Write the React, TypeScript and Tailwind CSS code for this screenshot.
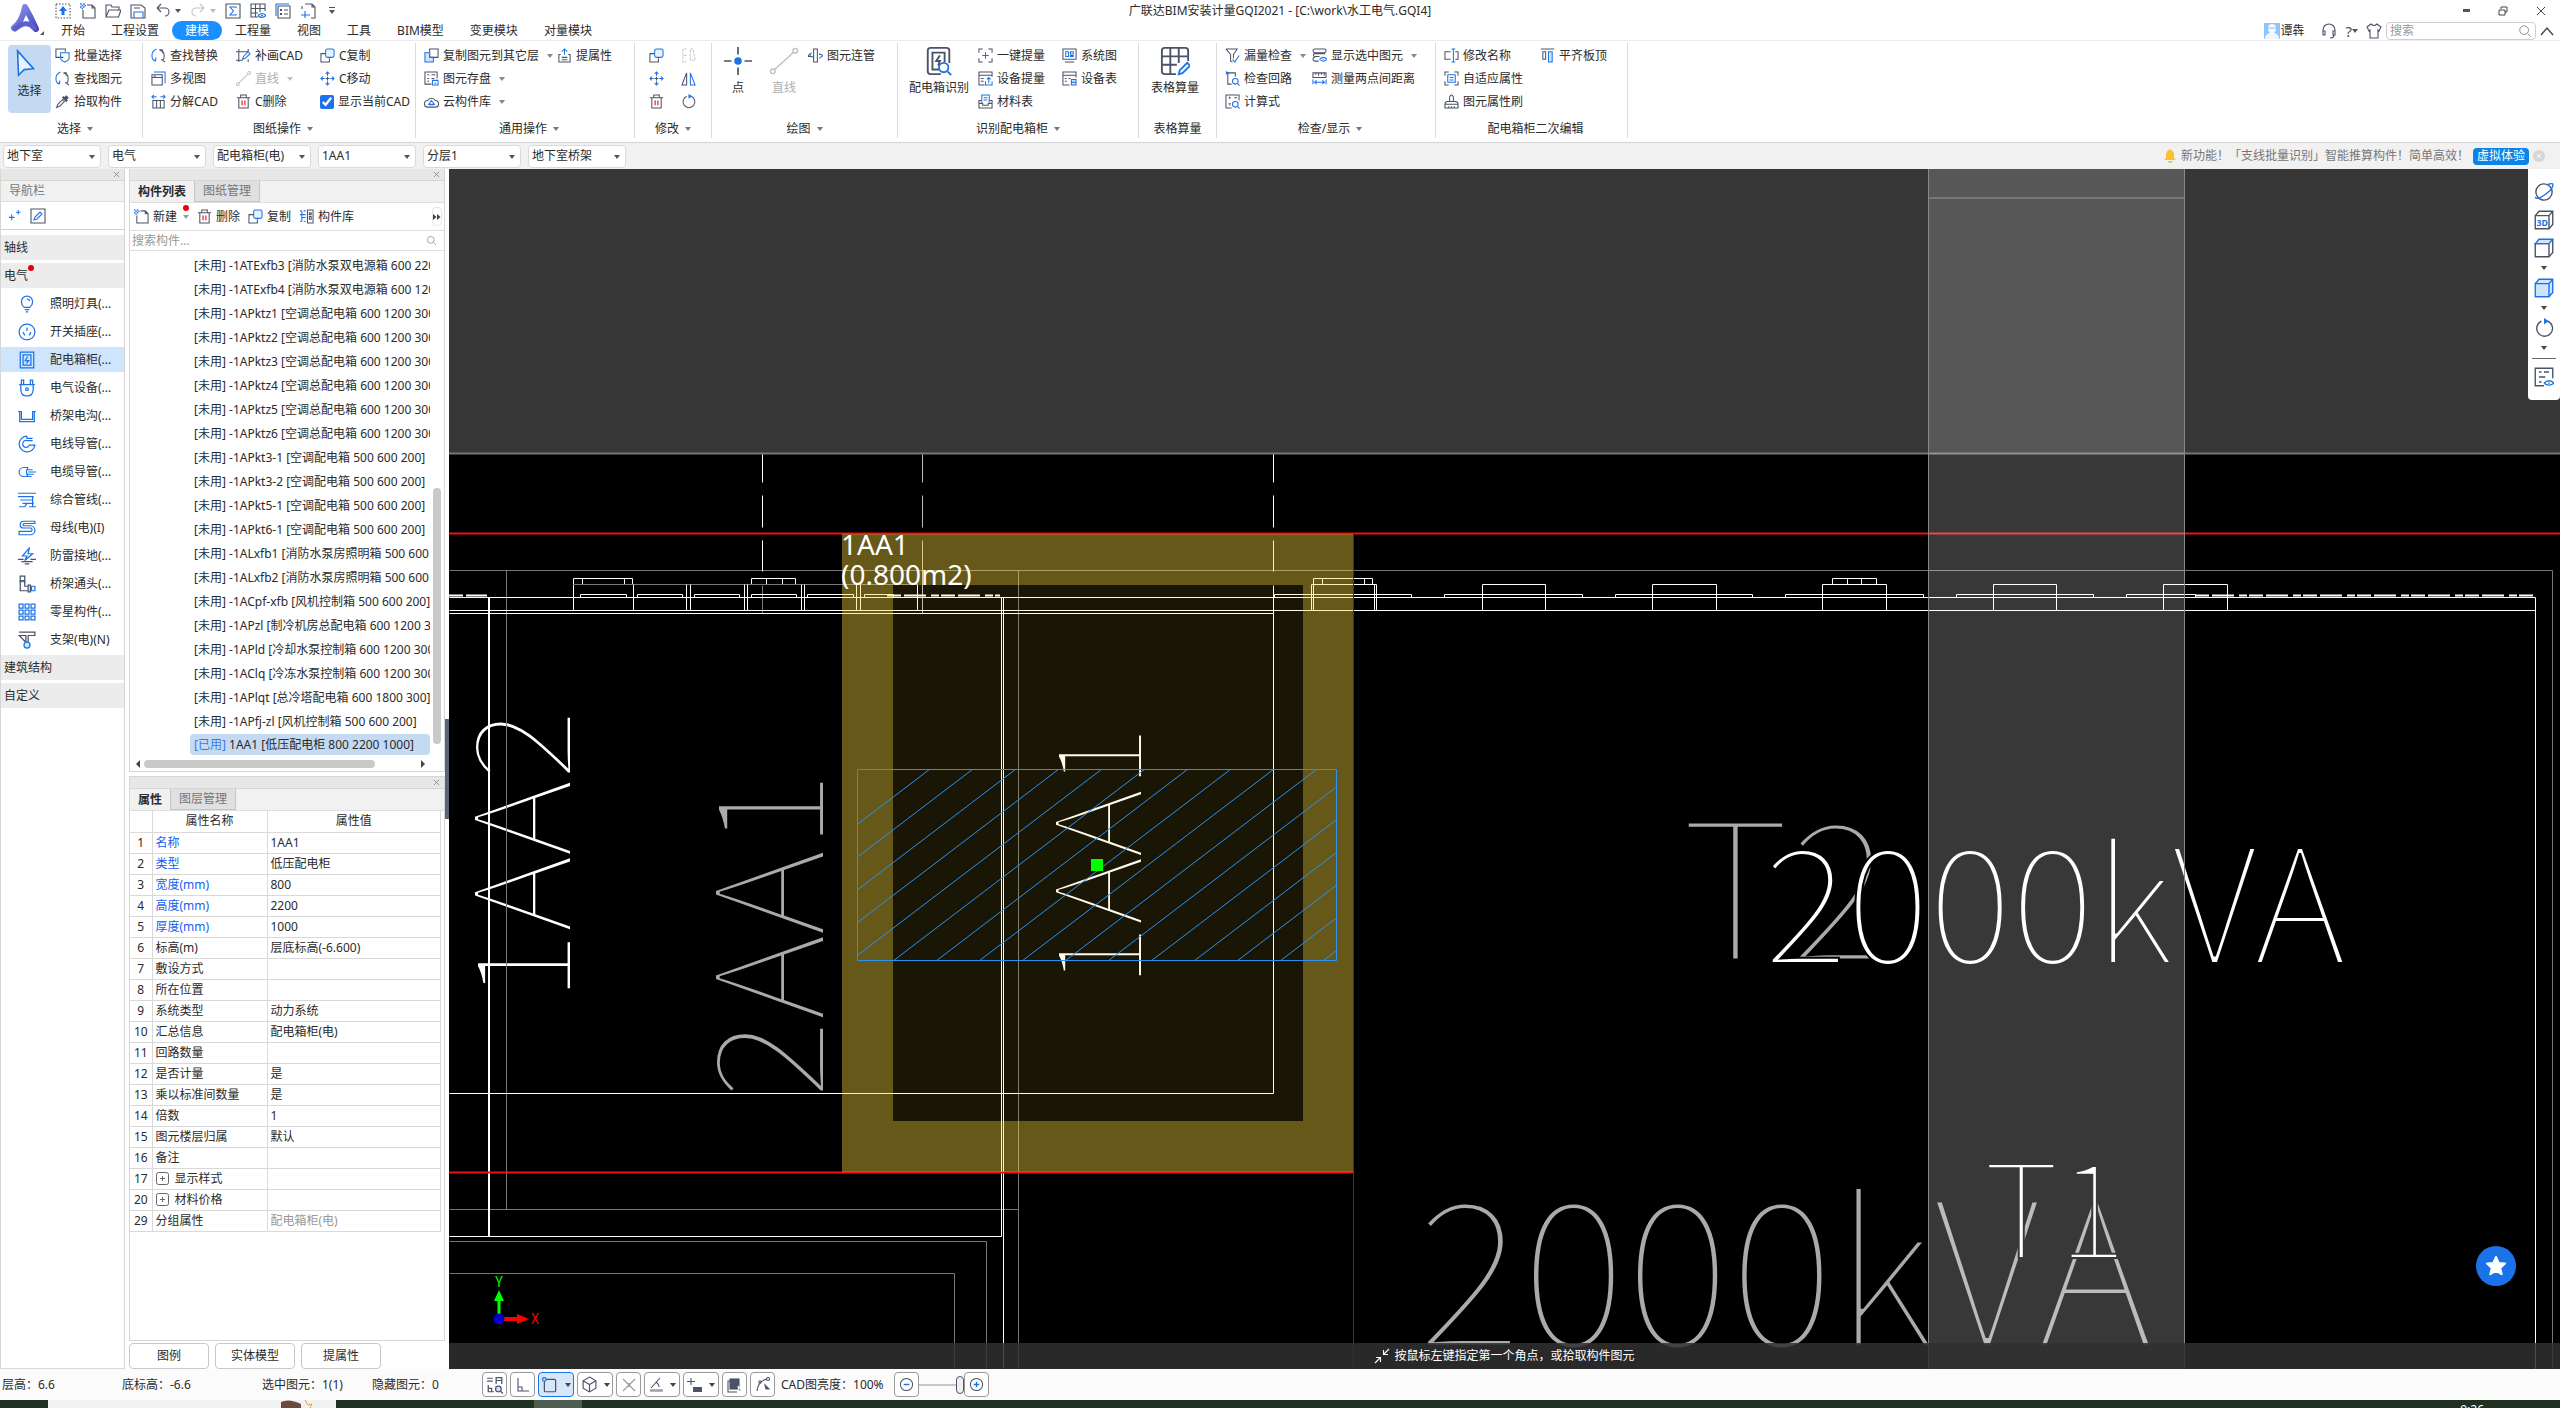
import React from 'react';

const G = '#4b5368';
const B = '#1a73e8';
const L = '#cfe3fb';

type IconDef = { d?: string; b?: string; x?: React.ReactNode };

const icons: Record<string, IconDef> = {
  upload: { x: <><rect x="1" y="1" width="14" height="14" stroke={G} strokeDasharray="1.5 1.5" /><path d="M8 3l4 5H9.5v4h-3V8H4z" fill={B} stroke="none" /></> },
  newDoc: { d: 'M7 2h5l3 3v10H3V7M12 2v3h3', x: <path d="M0 1h1.5M3 1h1.5M1.5 2.500H3M4.500 2.500H6M0 4h1.500M3 4h1.500M1.500 5.500H3" stroke={B} strokeWidth="1.500" /> },
  open: { d: 'M1 14V2h5l1 2h7v3M1 14l3-7h12l-2.500 7z' },
  save: { d: 'M1 15V2h10l4 3v10zM4 5h6', b: 'M4 15V9h9v6' },
  undo: { d: 'M2 5h8a4 4 0 0 1 0 8M2 5l4-4M2 5l4 4' },
  redo: { x: <path d="M14 5H6a4 4 0 0 0 0 8M14 5l-4-4M14 5l-4 4" stroke="#c4c4c4" /> },
  sigma: { d: 'M1 1h14v14H1z', b: 'M11 5V4H5l3.500 4L5 12h6v-1' },
  tableEye: { d: 'M8 14H1V1h14v7M1 5.500h14M1 10h7M5.500 1v13M10 1v8', b: 'M8 12.500q4-4 8 0q-4 4-8 0', x: <circle cx="12" cy="12.500" r="1" fill={B} /> },
  listDoc: { b: 'M1 13V1h13', d: 'M3 3h12v12H3zM9 7h4M9 11h4M5.500 6.500h1v1h-1zM5.500 10.500h1v1h-1z' },
  frame: { d: 'M5 1h7l3 3v11h-4M12 1v3h3M2 6V3', b: 'M5 8v7M1 12h9' },
  multi: { d: 'M9 10H1V1h10v3', b: 'M6 5h9v6q0 2-4.500 4Q6 13 6 11z' },
  find: { b: 'M6 1q-5 2-5 7t4 6M2 13h3v-3', d: 'M9 2q5 1 5 6t-2 5M9 2h3v3M11 12l4 3' },
  picker: { x: <><path d="M2 14l1-3 5-5 2 2-5 5z" stroke={G} /><path d="M8 4l4 4 1-1-1-1 2-2-2-2-2 2-1-1z" fill={G} stroke={G} /><path d="M1 15l2-2" stroke={B} /></> },
  views: { d: 'M1 4h11v11H1zM1 7h11M3 5.500h2', b: 'M3 1h12v12' },
  split: { d: 'M2 7h12v8H2zM6 7v8M10 7v8', b: 'M1 3h5M3 1L1 3l2 2M10 3h5M13 1l2 2-2 2' },
  patch: { d: 'M0 4h13M3 1v14M13 1v3M0 13h7M13 12v3', b: 'M7 12l1-3 5-5 2 2-5 5z' },
  lineGrey: { x: <g stroke="#c4c4c4"><path d="M3 13L13 3" /><circle cx="2" cy="14" r="1.500" /><circle cx="14" cy="2" r="1.500" /></g> },
  trash: { d: 'M1 4h14M5 4V1h6v3M3 4v11h10V4', x: <path d="M6.500 7v5M9.500 7v5" stroke="#e0242a" strokeWidth="1.300" /> },
  copy: { d: 'M6 6H1v9h9v-4', x: <rect x="6" y="1" width="9" height="9" rx="2" fill="#e8f2fe" stroke={B} /> },
  move: { b: 'M8 5V1M6 3l2-2 2 2M8 11v4M6 13l2 2 2-2M5 8H1M3 6L1 8l2 2M11 8h4M13 6l2 2-2 2', d: 'M6 8h4M8 6v4' },
  copyFloor: { d: 'M6 1h9v9H6z', x: <path d="M6 5H1v10h9v-5H6z" fill={L} stroke={B} /> },
  lift: { b: 'M8 7V1M5 4l3-3 3 3', d: 'M4 7H2v8h12V7h-2M5 10h6M5 12.500h6' },
  store: { d: 'M8 14H1V1h13v7M3.500 4h2M8 4h4M3.500 8h2M3.500 11h2M8 8h3', b: 'M9 10h6v5H9zM11 13h2' },
  cloud: { d: 'M4 14a3.500 3.500 0 0 1 0-7a4.500 4.500 0 0 1 8 0a3.500 3.500 0 0 1 0 7z', b: 'M5 11l3-4 3 4zM5 11.500h6' },
  mirrorGrey: { x: <path d="M6 1H2v14h4M6 8H2M10 1h3l2 12h-5z" stroke="#c9c9c9" strokeDasharray="3 1" /> },
  mirror: { b: 'M10 2v13h5z', d: 'M6 2v13H1z' },
  rotate: { d: 'M11 2.500a6.300 6.300 0 1 1-5 0', x: <path d="M8 0l4 2.500L8 5z" fill={B} stroke="none" /> },
  tube: { d: 'M6 1h4v14H6zM2 6L0 9h5M12 7h3', b: 'M4 5q-4 3 1 5M12 11l4-3-4-2' },
  keyQty: { d: 'M1 5V1h4M11 1h4v4M15 11v4h-4M5 15H1v-4', b: 'M8 4.500v7M4.500 8h7' },
  devQty: { d: 'M7 15H1V1h14v5M1 4.500h14M3 8h3M3 11h3', b: 'M8 11v4h7v-4M11.500 13V7M9.500 9l2-2 2 2' },
  material: { b: 'M4 9V1h8v8M6 4h4M6 6.500h4', d: 'M4 7H1v8h14V7h-3M1 10h4v2h6v-2h4' },
  system: { d: 'M1 1h14v11H1zM3 15h10', b: 'M4 4h3v5H4zM9 4h3v2.500H9zM9 8h3v1H9z' },
  devTable: { d: 'M8 15H1V1h14v6M1 4.500h14M3 8h2M7 8h2M3 11h2', x: <path d="M10 9h5v6h-5zM10 12h5" stroke={B} fill={L} /> },
  leak: { d: 'M1 1h12L9 7v4M1 1l5 6v7l2 1', b: 'M8 12l2.500 3L15 8' },
  showSel: { d: 'M3 1h10a1 1 0 0 1 0 4H3a1 1 0 0 1 0-4M8 9H3a1 1 0 0 1 0-3h11M7 14H3a1 1 0 0 1 0-4', b: 'M8 12q4-4 8 0q-4 4-8 0M11.500 12h1' },
  loop: { d: 'M3 2h8v4M3 2v12h4', x: <><path d="M1 0l4 2-4 2z" fill={B} stroke="none" /><circle cx="11" cy="11" r="3" stroke={B} /><path d="M13 13l2.500 2.500" stroke={B} /></> },
  measure: { d: 'M1 7V2h14v5zM4 2v2M7 2v3M10 2v2M13 2v3', b: 'M1 9v5M15 9v5M2 12h12M5 10l-2 2 2 2M11 10l2 2-2 2' },
  formula: { d: 'M7 15H1V1h14v6M4 4h2M5 3v2M10 4h3M4 10l2 2M6 10l-2 2', x: <><circle cx="11" cy="11" r="3" stroke={B} /><path d="M13 13l2.500 2.500" stroke={B} /></> },
  rename: { d: 'M7 4H1v8h6M12 4h3v8h-3', b: 'M8 1h4M10 1v14M8 15h4' },
  adapt: { d: 'M1 5V1h4M11 1h4v4M15 11v4h-4M5 15H1v-4', b: 'M4 4h8v8H4zM6 7h4M6 9.500h4' },
  brush: { d: 'M6 8V3q2-4 4 0v5M1 11q0-3 3-3h8q3 0 3 3v4H1zM1 11h14M5 13v2M8 13v2M11 13v2' },
  align: { d: 'M1 1h14M3 4h3v8H3z', x: <path d="M9 4h4v11H9z" fill={L} stroke={B} /> },
  bulb: { b: 'M5.500 11Q3 9 3 6a5 5 0 0 1 10 0q0 3-2.500 5zM6 13h4M7 15h2M8 3.500q2 0 2.500 2' },
  socket: { x: <g stroke={B}><circle cx="8" cy="8" r="7" /><path d="M8 4v3M4.500 8l1.500 3M11.500 8L10 11" /></g> },
  box: { b: 'M2 1h12v14H2zM4.500 3.500h7v9h-7zM8.500 5l-2 3.500h3L7.500 11' },
  device: { b: 'M1 5h14M3 5V1h2v4M11 5V1h2v4M2.500 5v4q0 6 5.500 6t5.500-6V5', x: <circle cx="8" cy="9" r="1.200" stroke={B} /> },
  tray: { b: 'M0 4h3v7h10V4h3M1.500 4v9h13V4' },
  wire: { b: 'M8 1a7 7 0 1 0 7 8H10a3 3 0 1 1-2-4h5M8 1v2h5' },
  cable: { b: 'M9 4H5a4 4 0 0 0 0 8h4M9 4q-3 4 0 8M8 6h5M9 8h7M8 10h6M8 12h4' },
  pipes: { b: 'M0 2h16M0 5h14M2 8h11M13 5v9M4 11h10M1 14h5l2-3M10 14h6' },
  bus: { b: 'M15 2H5a3 3 0 0 0 0 6h6a1 1 0 0 1 0 3H1v3h10a4 4 0 0 0 0-8H5.500a1 1 0 0 1 0-2H15z' },
  lightning: { b: 'M10 1L4 8h4l-2 4 7-6H9z', d: 'M0 11h5M11 11h5M3 13h10M6 15h4' },
  joint: { d: 'M2 1h4v4H2zM2 5v9h7v-4H6V5M9 9h2v6H9z', b: 'M1 6h6M12 10h3v4h-3z' },
  grid: { b: 'M1 1h3.500v3.500H1zM6.300 1h3.500v3.500H6.300zM11.600 1h3.500v3.500h-3.500zM1 6.300h3.500v3.500H1zM6.300 6.300h3.500v3.500H6.300zM11.600 6.300h3.500v3.500h-3.500zM1 11.600h3.500v3.500H1zM6.300 11.600h3.500v3.500H6.300zM11.600 11.600h3.500v3.500h-3.500z' },
  support: { d: 'M1 1h14v3H9v6M7 10V4H1z', x: <circle cx="8" cy="12.500" r="2.700" fill={L} stroke={B} /> },
  plus2: { b: 'M5 7v6M2 10h6M12 2v5M9.500 4.500h5' },
  edit: { d: 'M1 1h14v14H1z', b: 'M4 12l1-3 5-5 2 2-5 5z' },
  lib: { d: 'M9 1h6v14H9zM11 4h2v2h-2zM11 8h2v3h-2z', b: 'M1 2h2M5 2h2M1 6h6M1 13h2M5 13h2M3 9h4M3 2v11' },
  search: { x: <g stroke="#8d8d8d"><circle cx="7" cy="7" r="5" /><path d="M11 11l3.500 3.500" /></g> },
  headset: { d: 'M2 10V7a6 6 0 0 1 12 0v3M2 8v4h2V8zM14 8v4h-2V8zM13 12q0 3-4 3' },
  shirt: { d: 'M5 1L1 4l2 4 1-1v8h8V7l1 1 2-4-4-3q-3 3-6 0z' },
  orbit: { x: <><circle cx="8" cy="8" r="6.500" stroke={G} /><path d="M1 12q1 3 8-2t6-8.500Q14 1 11 2" stroke={B} /></> },
  cube3d: { d: 'M1 4.500h11V15H1zM1 4.500L4 1h11v10.500L12 15M12 4.500L15 1', x: <text x="2" y="13" fontSize="7" fill={B} stroke="none" fontWeight="700">3D</text> },
  cubeTop: { d: 'M1 4.500h11V15H1zM15 1v10.500L12 15M12 4.500V15', x: <path d="M1 4.500L4 1h11l-3 3.500z" fill={L} stroke={B} /> },
  cubeBlue: { x: <path d="M1 4.500h11V15H1zM1 4.500L4 1h11v10.500L12 15M12 4.500L15 1" fill={L} stroke={B} /> },
  listEye: { d: 'M8 15H1V1h14v8M4 4h2M8 4h4M4 8h5M4 12h2', b: 'M8 13q4-4 8 0q-4 3-8 0M11.500 13h1' },
  sbFind: { d: 'M1 2h5M1 4.500h5M9 7V1.500h5V7M9 4h5M2 8v6h5M2 11h3v3', x: <><circle cx="11" cy="11.500" r="2.500" fill={L} stroke={G} /><path d="M13 13.500l2 2" stroke={G} /></> },
  sbOrtho: { d: 'M3 1v13h11M3 10h4v4' },
  sbRect: { d: 'M3 4q0-1 1-1h8q1 0 1 1v9q0 1-1 1H4q-1 0-1-1z', x: <circle cx="3" cy="3" r="1.600" fill={L} stroke={B} /> },
  sbCube: { d: 'M8 1l6 3.500v7L8 15l-6-3.500v-7zM2 4.500l6 3.500 6-3.500M8 8v7' },
  sbCross: { x: <path d="M2 2l12 12M14 2L2 14M8 6v4" stroke="#9a9a9a" /> },
  sbAngle: { d: 'M3 11L12 1', x: <><path d="M2 13.500h13" stroke="#9a9fad" strokeWidth="2.500" /><path d="M8 5q3 2 3 5" stroke={G} /></> },
  sbPlus: { d: 'M4 1v7M0 4.500h8', x: <rect x="6" y="10" width="9" height="5" fill={G} stroke="none" /> },
  sbSelect: { d: 'M3 4H1v11h9', x: <><rect x="3" y="2" width="9" height="10" fill={G} stroke={G} /><path d="M11 9l4 5h-3z" fill={G} stroke="#fff" /></> },
  sbCurve: { d: 'M2 14Q3 4 12 2', x: <><circle cx="13" cy="2" r="1.500" stroke={G} /><circle cx="5" cy="5" r="1.200" stroke={G} /><path d="M10 8l4 4h-3z" fill={G} stroke={G} /></> },
  minus: { x: <><circle cx="8" cy="8" r="6.500" stroke={G} /><path d="M5 8h6" stroke={B} strokeWidth="1.500" /></> },
  plus: { x: <><circle cx="8" cy="8" r="6.500" stroke={G} /><path d="M5 8h6M8 5v6" stroke={B} strokeWidth="1.500" /></> },
  arrowsIn: { x: <path d="M15 1L9.500 6.500M9.500 2v4.500H14M1 15l5.500-5.500M6.500 14V9.500H2" stroke="#fff" /> },
};

function Icon({ name, className = 'size-[15px]' }: { name: string; className?: string }) {
  const i = icons[name];
  return (
    <svg viewBox="0 0 16 16" fill="none" strokeWidth="1.1" className={`shrink-0 ${className}`} aria-hidden="true">
      {i.d && <path d={i.d} stroke={G} />}
      {i.b && <path d={i.b} stroke={B} />}
      {i.x}
    </svg>
  );
}

function Caret({ className = 'border-t-[#777]' }: { className?: string }) {
  return <span className={`inline-block border-x-[3px] border-t-4 border-x-transparent ${className}`} />;
}

function Tool({ icon, label, caret, muted }: { icon: string; label?: string; caret?: boolean; muted?: boolean }) {
  return (
    <button aria-label={label ?? icon} className={`flex h-[23px] items-center gap-1 whitespace-nowrap ${muted ? 'text-[#b0b0b0]' : ''}`}>
      <Icon name={icon} />
      {label && <span>{label}</span>}
      {caret && <Caret className={muted ? 'ml-1 border-t-[#c0c0c0]' : 'ml-1 border-t-[#888]'} />}
    </button>
  );
}

function Group({ label, caret, className, children }: { label: string; caret?: boolean; className: string; children: React.ReactNode }) {
  return (
    <section className={`flex shrink-0 flex-col border-r border-[#dcdcdc] ${className}`}>
      <div className="flex h-[72px] items-start">{children}</div>
      <div className="flex flex-1 items-center justify-center gap-1.5 pt-1">
        {label}
        {caret && <Caret />}
      </div>
    </section>
  );
}

const Col = ({ className = '', children }: { className?: string; children: React.ReactNode }) => (
  <div className={`flex shrink-0 flex-col items-start ${className}`}>{children}</div>
);

function Header() {
  const tabs = ['开始', '工程设置', '建模', '工程量', '视图', '工具', 'BIM模型', '变更模块', '对量模块'];
  return (
    <header className="relative flex h-[41px] shrink-0 border-b border-[#ececec]">
      <svg viewBox="0 0 40 36" className="h-9 w-12 shrink-0" aria-label="Logo" fill="none">
        <defs>
          <linearGradient id="logo" x1="0" y1="0" x2="1" y2="1">
            <stop offset="0" stopColor="#8a97f0" />
            <stop offset="1" stopColor="#4a45b4" />
          </linearGradient>
        </defs>
        <path d="M10 28Q18 22 21 7q6 10 11 22" stroke="url(#logo)" strokeWidth="6" strokeLinecap="round" strokeLinejoin="round" />
        <path d="M11 29q12-10 19-1" stroke="#5d5fd0" strokeWidth="5" strokeLinecap="round" />
        <path d="M40 31v4h-4z" fill="#555" />
      </svg>
      <div className="flex flex-1 flex-col">
        <div className="flex h-[21px] items-center gap-[9px] pl-[7px]">
          {['upload', 'newDoc', 'open', 'save'].map((n) => (
            <button key={n} aria-label={n}><Icon name={n} className="size-4" /></button>
          ))}
          <button aria-label="撤销" className="flex items-center gap-1"><Icon name="undo" className="size-4" /><Caret className="border-t-[#555]" /></button>
          <button aria-label="恢复" className="flex items-center gap-1"><Icon name="redo" className="size-4" /><Caret className="border-t-[#bbb]" /></button>
          {['sigma', 'tableEye', 'listDoc', 'frame'].map((n) => (
            <button key={n} aria-label={n}><Icon name={n} className="size-4" /></button>
          ))}
          <button aria-label="更多" className="flex flex-col items-center gap-0.5 pl-1"><span className="h-px w-1.5 bg-[#555]" /><Caret className="border-t-[#555]" /></button>
        </div>
        <nav className="flex h-[19px] items-center">
          {tabs.map((t) => (
            <button key={t} className={`h-[19px] rounded-full px-[13px] leading-[18px] ${t === '建模' ? 'bg-[#1890ff] text-white' : ''}`}>{t}</button>
          ))}
        </nav>
      </div>
      <h1 className="pointer-events-none absolute inset-x-0 top-0 flex h-[21px] items-center justify-center text-[12px]">广联达BIM安装计量GQI2021 - [C:\work\水工电气.GQI4]</h1>
      <div className="flex flex-col items-end">
        <div className="flex h-[21px] items-center gap-7 pr-[14px]">
          <button aria-label="最小化" className="h-[3px] w-[7px] bg-[#555]" />
          <button aria-label="还原"><svg viewBox="0 0 10 10" className="size-[10px]" fill="none" stroke="#444"><path d="M3 3V1h6v5H7M1 4h6v5H1z" /></svg></button>
          <button aria-label="关闭"><svg viewBox="0 0 10 10" className="size-[10px]" stroke="#444"><path d="M1 1l8 8M9 1L1 9" /></svg></button>
        </div>
        <div className="flex h-[19px] items-center pr-1.5">
          <svg viewBox="0 0 16 16" className="size-4" aria-hidden="true"><path fill="#8ec6fb" d="M0 0h16v16H0z" /><path fill="#f2f8fe" d="M4 5a4 4 0 0 1 8 0q0 4-2 5 5 1 5 6H1q0-5 5-6-2-1-2-5" /><path stroke="#8ec6fb" d="M3 5h10" /></svg>
          <span>谭犇</span>
          <button aria-label="客服" className="ml-[17px]"><Icon name="headset" className="size-4" /></button>
          <button aria-label="帮助" className="ml-2 flex items-center text-[15px] leading-4 text-[#4b5368]">?<Caret className="border-t-[#555]" /></button>
          <button aria-label="皮肤" className="ml-2"><Icon name="shirt" className="size-4" /></button>
          <label className="ml-1 flex h-[18px] w-[150px] items-center rounded border border-[#cfcfcf] px-[3px]">
            <input aria-label="搜索" placeholder="搜索" className="w-full min-w-0 text-[12px] outline-none placeholder:text-[#999]" />
            <Icon name="search" className="size-3.5" />
          </label>
          <button aria-label="收起" className="ml-1"><svg viewBox="0 0 14 10" className="h-2.5 w-3.5" fill="none" stroke="#444" strokeWidth="1.400"><path d="M1 9l6-7 6 7" /></svg></button>
        </div>
      </div>
    </header>
  );
}

function Ribbon() {
  return (
    <div className="flex h-[102px] shrink-0 overflow-hidden border-b border-[#d4d4d4] pb-1 pt-0.5">
      <Group label="选择" caret className="w-[143px] pl-2">
        <button className="mt-0.5 flex h-[68px] w-[43px] shrink-0 flex-col items-center rounded bg-[#c3daf2] pt-1">
          <svg viewBox="0 0 24 32" className="mr-2 h-[30px] w-6" fill="none" stroke={B} strokeWidth="1.700"><path d="M3 2l17 19-10 1-6 6z" fill="#e9f2fd" /></svg>
          <span className="mt-1">选择</span>
        </button>
        <Col className="ml-1 pt-px">
          <Tool icon="multi" label="批量选择" /><Tool icon="find" label="查找图元" /><Tool icon="picker" label="拾取构件" />
        </Col>
      </Group>
      <Group label="图纸操作" caret className="w-[273px] pl-2 pt-px">
        <Col className="w-[85px]"><Tool icon="find" label="查找替换" /><Tool icon="views" label="多视图" /><Tool icon="split" label="分解CAD" /></Col>
        <Col className="w-[84px]"><Tool icon="patch" label="补画CAD" /><Tool icon="lineGrey" label="直线" caret muted /><Tool icon="trash" label="C删除" /></Col>
        <Col>
          <Tool icon="copy" label="C复制" /><Tool icon="move" label="C移动" />
          <label className="flex h-[23px] items-center gap-1 whitespace-nowrap"><input type="checkbox" defaultChecked className="size-[14px] accent-[#1a73e8]" />显示当前CAD</label>
        </Col>
      </Group>
      <Group label="通用操作" caret className="w-[219px] pl-2 pt-px">
        <Col>
          <div className="flex gap-1"><Tool icon="copyFloor" label="复制图元到其它层" caret /><Tool icon="lift" label="提属性" /></div>
          <Tool icon="store" label="图元存盘" caret /><Tool icon="cloud" label="云构件库" caret />
        </Col>
      </Group>
      <Group label="修改" caret className="w-[77px] pt-px">
        <Col className="ml-[14px] w-8"><Tool icon="copy" /><Tool icon="move" /><Tool icon="trash" /></Col>
        <Col><Tool icon="mirrorGrey" /><Tool icon="mirror" /><Tool icon="rotate" /></Col>
      </Group>
      <Group label="绘图" caret className="w-[186px] pt-px">
        <button className="ml-2.5 flex w-8 shrink-0 flex-col items-center pt-0.5">
          <svg viewBox="0 0 32 32" className="size-[30px]" stroke={G} strokeWidth="1.800"><path d="M16 1v8M16 23v8M1 16h8M23 16h8" /><circle cx="16" cy="16" r="4" fill={B} stroke="none" /></svg>
          <span className="mt-1">点</span>
        </button>
        <button className="ml-[14px] flex w-8 shrink-0 flex-col items-center pt-0.5 text-[#b0b0b0]">
          <svg viewBox="0 0 32 32" className="size-[30px]" fill="none" stroke="#c0c0c0" strokeWidth="1.500"><path d="M6 25L26 7" /><circle cx="4" cy="27" r="2.500" /><circle cx="28" cy="5" r="2.500" /></svg>
          <span className="mt-1">直线</span>
        </button>
        <Col className="ml-2"><Tool icon="tube" label="图元连管" /></Col>
      </Group>
      <Group label="识别配电箱柜" caret className="w-[241px] pt-px">
        <button className="ml-2.5 flex w-[62px] shrink-0 flex-col items-center whitespace-nowrap pt-0.5">
          <svg viewBox="0 0 32 32" className="size-[30px]" fill="none" stroke={G} strokeWidth="2"><path d="M18 30H7q-3 0-3-3V5q0-3 3-3h17q3 0 3 3v13M16 25H9V7h13v10M17 10l-4 6h4l-2 5" /><circle cx="21" cy="23" r="5" stroke={B} /><path d="M25 27l4 4" stroke={B} /></svg>
          <span className="mt-1">配电箱识别</span>
        </button>
        <Col className="ml-2 w-[84px]"><Tool icon="keyQty" label="一键提量" /><Tool icon="devQty" label="设备提量" /><Tool icon="material" label="材料表" /></Col>
        <Col><Tool icon="system" label="系统图" /><Tool icon="devTable" label="设备表" /></Col>
      </Group>
      <Group label="表格算量" className="w-[78px] pt-px">
        <button className="ml-2.5 flex w-[52px] shrink-0 flex-col items-center pt-0.5">
          <svg viewBox="0 0 32 32" className="size-[30px]" fill="none" stroke={G} strokeWidth="2"><path d="M17 30H5q-3 0-3-3V5q0-3 3-3h22q3 0 3 3v11M2 11h28M2 20h16M11 2v28M20 2v16" /><path d="M20 30l1-4 8-8 3 3-8 8z" stroke={B} /></svg>
          <span className="mt-1">表格算量</span>
        </button>
      </Group>
      <Group label="检查/显示" caret className="w-[219px] pl-2 pt-px">
        <Col className="w-[87px]"><Tool icon="leak" label="漏量检查" caret /><Tool icon="loop" label="检查回路" /><Tool icon="formula" label="计算式" /></Col>
        <Col><Tool icon="showSel" label="显示选中图元" caret /><Tool icon="measure" label="测量两点间距离" /></Col>
      </Group>
      <Group label="配电箱柜二次编辑" className="w-[192px] pl-2 pt-px">
        <Col className="w-24"><Tool icon="rename" label="修改名称" /><Tool icon="adapt" label="自适应属性" /><Tool icon="brush" label="图元属性刷" /></Col>
        <Col><Tool icon="align" label="平齐板顶" /></Col>
      </Group>
    </div>
  );
}

function FilterBar() {
  return (
    <div className="flex h-[26px] shrink-0 items-center justify-between bg-[#f1f1f1] px-[3px]">
      <div className="flex gap-[7px]">
        {['地下室', '电气', '配电箱柜(电)', '1AA1', '分层1', '地下室桥架'].map((v) => (
          <div key={v} className="relative h-[23px] w-[98px] rounded border border-[#dadada] bg-white">
            <select aria-label={v} className="h-full w-full appearance-none bg-transparent pl-[3px] pr-4 outline-none"><option>{v}</option></select>
            <Caret className="pointer-events-none absolute right-[5px] top-[9px] border-t-[#555]" />
          </div>
        ))}
      </div>
      <div className="flex items-center gap-1 pr-3 text-[#777]">
        <svg viewBox="0 0 14 14" className="size-3.5" aria-hidden="true"><path fill="#fbc02d" d="M7 0a1 1 0 0 1 1 1q3 1 3 5v3l2 2H1l2-2V6q0-4 3-5a1 1 0 0 1 1-1M5 12h5q-1 2-3 2t-2-2" /></svg>
        <span>新功能！「支线批量识别」智能推算构件！简单高效！</span>
        <button className="h-[17px] rounded-sm bg-[#0a84e8] px-1 leading-4 text-white">虚拟体验</button>
        <button aria-label="关闭通知"><svg viewBox="0 0 12 12" className="size-3"><circle cx="6" cy="6" r="6" fill="#d6d6d6" /><path d="M4 4l4 4M8 4L4 8" stroke="#fff" /></svg></button>
      </div>
    </div>
  );
}

function Strip() {
  return (
    <div className="flex h-3 shrink-0 items-center justify-end border-b border-[#d6d6d6] bg-[#e7e7e7] pr-1">
      <button aria-label="关闭面板"><svg viewBox="0 0 8 8" className="size-[7px]" stroke="#888"><path d="M1 1l6 6M7 1L1 7" /></svg></button>
    </div>
  );
}

function NavPanel() {
  const items = [
    ['bulb', '照明灯具(...'], ['socket', '开关插座(...'], ['box', '配电箱柜(...'], ['device', '电气设备(...'], ['tray', '桥架电沟(...'],
    ['wire', '电线导管(...'], ['cable', '电缆导管(...'], ['pipes', '综合管线(...'], ['bus', '母线(电)(I)'], ['lightning', '防雷接地(...'],
    ['joint', '桥架通头(...'], ['grid', '零星构件(...'], ['support', '支架(电)(N)'],
  ];
  const head = 'relative h-[25px] w-full bg-[#ececec] pl-[3px] text-left';
  return (
    <aside className="flex w-[125px] shrink-0 flex-col border border-t-0 border-[#d6d6d6] bg-white">
      <Strip />
      <div className="flex h-[21px] shrink-0 items-center border-b border-[#dedede] bg-[#f1f1f1] pl-2 text-[#777]">导航栏</div>
      <div className="flex h-7 shrink-0 items-center gap-2 border-b border-[#d0d0d0] pl-1.5">
        <button aria-label="添加"><Icon name="plus2" className="size-[15px]" /></button>
        <button aria-label="编辑"><Icon name="edit" className="size-4" /></button>
      </div>
      <div className="flex flex-col gap-[3px] pt-[5px]">
        <button className={head}>轴线</button>
        <button className={head}>电气<span className="absolute left-[27px] top-0.5 size-1.5 rounded-full bg-red-600" /></button>
        {items.map(([icon, label]) => (
          <button key={icon} className={`flex h-[25px] items-center gap-[14px] pl-[17px] ${icon === 'box' ? 'bg-[#cfe5fd]' : ''}`}>
            <Icon name={icon} className="size-[18px]" />{label}
          </button>
        ))}
        <button className={head}>建筑结构</button>
        <button className={head}>自定义</button>
      </div>
    </aside>
  );
}

const components = [
  '-1ATExfb3 [消防水泵双电源箱 600 2200 400]', '-1ATExfb4 [消防水泵双电源箱 600 1200 300]', '-1APktz1 [空调总配电箱 600 1200 300]', '-1APktz2 [空调总配电箱 600 1200 300]',
  '-1APktz3 [空调总配电箱 600 1200 300]', '-1APktz4 [空调总配电箱 600 1200 300]', '-1APktz5 [空调总配电箱 600 1200 300]', '-1APktz6 [空调总配电箱 600 1200 300]',
  '-1APkt3-1 [空调配电箱 500 600 200]', '-1APkt3-2 [空调配电箱 500 600 200]', '-1APkt5-1 [空调配电箱 500 600 200]', '-1APkt6-1 [空调配电箱 500 600 200]',
  '-1ALxfb1 [消防水泵房照明箱 500 600 200]', '-1ALxfb2 [消防水泵房照明箱 500 600 200]', '-1ACpf-xfb [风机控制箱 500 600 200]', '-1APzl [制冷机房总配电箱 600 1200 300]',
  '-1APld [冷却水泵控制箱 600 1200 300]', '-1AClq [冷冻水泵控制箱 600 1200 300]', '-1APlqt [总冷塔配电箱 600 1800 300]', '-1APfj-zl [风机控制箱 500 600 200]', '1AA1 [低压配电柜 800 2200 1000]',
];

const props: [number, string, string][] = [
  [1, '名称', '1AA1'], [2, '类型', '低压配电柜'], [3, '宽度(mm)', '800'], [4, '高度(mm)', '2200'], [5, '厚度(mm)', '1000'],
  [6, '标高(m)', '层底标高(-6.600)'], [7, '敷设方式', ''], [8, '所在位置', ''], [9, '系统类型', '动力系统'], [10, '汇总信息', '配电箱柜(电)'],
  [11, '回路数量', ''], [12, '是否计量', '是'], [13, '乘以标准间数量', '是'], [14, '倍数', '1'], [15, '图元楼层归属', '默认'], [16, '备注', ''],
  [17, '显示样式', ''], [20, '材料价格', ''], [29, '分组属性', '配电箱柜(电)'],
];

function PanelTabs({ a, b }: { a: string; b: string }) {
  return (
    <div role="tablist" className="flex h-[22px] shrink-0 border-b border-[#dedede] bg-[#f1f1f1]">
      <button role="tab" aria-selected="true" className="border-r border-[#c4c4c4] px-2 font-bold">{a}</button>
      <button role="tab" aria-selected="false" className="border border-t-0 border-l-0 border-[#c4c4c4] bg-[#e0e0e0] px-2 text-[#777]">{b}</button>
    </div>
  );
}

function ComponentPanel() {
  return (
    <section className="flex shrink-0 flex-col border border-t-0 border-[#d6d6d6] bg-white">
      <Strip />
      <PanelTabs a="构件列表" b="图纸管理" />
      <div className="flex h-7 shrink-0 items-center border-b border-[#dedede] pl-1">
        <button className="relative flex items-center gap-1"><Icon name="newDoc" />新建<Caret className="ml-0.5 border-t-[#999]" /><span className="absolute -top-1 right-0 size-1.5 rounded-full bg-red-600" /></button>
        <button className="ml-2 flex items-center gap-1"><Icon name="trash" />删除</button>
        <button className="ml-2 flex items-center gap-1"><Icon name="copy" />复制</button>
        <button className="ml-2 flex items-center gap-1"><Icon name="lib" />构件库</button>
        <button aria-label="更多" className="ml-auto mr-0.5 flex h-[19px] w-[10px] items-center justify-center rounded border border-[#e6e6e6]">
          <svg viewBox="0 0 8 6" className="h-1.5 w-2 shrink-0" fill="#444"><path d="M0 0l3.500 3L0 6zM4 0l3.500 3L4 6z" /></svg>
        </button>
      </div>
      <label className="flex h-5 shrink-0 items-center border-b border-[#dedede] pl-0.5 pr-[7px]">
        <input aria-label="搜索构件" placeholder="搜索构件..." className="min-w-0 flex-1 outline-none placeholder:text-[#999]" />
        <Icon name="search" className="size-[11px]" />
      </label>
      <div className="flex shrink-0 pt-[3px]">
        <ul className="ml-[60px] min-w-0 flex-1 overflow-hidden whitespace-nowrap">
          {components.map((c, i) => {
            const used = i === components.length - 1;
            return (
              <li key={c} className={`flex items-center overflow-hidden pl-1 ${used ? 'h-[21px] rounded-sm bg-[#c3daf2]' : 'h-6'}`}>
                <span className={used ? 'text-[#3a7be0]' : ''}>[{used ? '已用' : '未用'}]</span>&nbsp;{c}
              </li>
            );
          })}
        </ul>
        <div className="w-[14px] pl-[3px] pt-[234px]"><div className="h-64 w-2 rounded bg-[#c9c9c9]" /></div>
      </div>
      <div className="mt-0.5 flex h-[14px] shrink-0 items-center pl-1.5 pr-[19px]">
        <span className="border-y-4 border-r-4 border-y-transparent border-r-[#444]" />
        <span className="ml-1 h-2 w-[231px] rounded bg-[#c9c9c9]" />
        <span className="ml-auto border-y-4 border-l-4 border-y-transparent border-l-[#444]" />
      </div>
    </section>
  );
}

function PropertyPanel() {
  return (
    <section className="mt-1 flex min-h-0 flex-1 flex-col">
      <div className="flex min-h-0 flex-1 flex-col border border-[#d6d6d6] bg-white">
        <Strip />
        <PanelTabs a="属性" b="图层管理" />
        <table className="mr-[3px] table-fixed border-collapse [&_td]:border-b [&_td]:border-r [&_td]:border-[#d9d9d9] [&_th]:border-b [&_th]:border-r [&_th]:border-[#d9d9d9]">
          <colgroup><col className="w-[22px]" /><col className="w-[115px]" /><col /></colgroup>
          <thead><tr className="h-[21px]"><th aria-label="序号" /><th className="font-normal">属性名称</th><th className="font-normal">属性值</th></tr></thead>
          <tbody>
            {props.map(([n, name, value]) => (
              <tr key={n} className="h-[21px] leading-5">
                <td className="text-center">{n}</td>
                <td className={`whitespace-nowrap pl-[3px] ${n <= 5 ? 'text-[#1560f0]' : ''}`}>
                  {n === 17 || n === 20 ? (
                    <span className="flex items-center gap-1.5">
                      <button aria-label={`展开${name}`}>
                        <svg viewBox="0 0 13 13" className="size-[13px]" fill="none" stroke="#666"><rect x="0.5" y="0.5" width="12" height="12" rx="2" /><path d="M4 6.500h5M6.500 4v5" /></svg>
                      </button>
                      {name}
                    </span>
                  ) : name}
                </td>
                <td className={`whitespace-nowrap pl-[3px] ${n === 29 ? 'text-[#999]' : ''}`}>{value}</td>
              </tr>
            ))}
          </tbody>
        </table>
      </div>
      <div className="flex shrink-0 gap-1.5 pt-0.5">
        {['图例', '实体模型', '提属性'].map((b) => (
          <button key={b} className="h-[26px] w-20 rounded border border-[#c8c8c8] bg-white">{b}</button>
        ))}
      </div>
    </section>
  );
}

/** Lines are [x1, y1, x2, y2] in drawing units. */
const white: number[][] = [
  [449, 597, 2535, 597], [449, 610, 2535, 610], [449, 613, 1273, 613], [449, 1236, 1001, 1236],
  [488, 597, 488, 1236], [489, 597, 489, 1236], [1001, 597, 1001, 1236], [1003, 597, 1003, 1368], [2535, 597, 2535, 1369],
  [762, 454, 762, 482], [762, 495, 762, 527], [762, 540, 762, 571],
  [1273, 454, 1273, 482], [1273, 495, 1273, 527], [1273, 540, 1273, 571], [1273, 585, 1273, 1093], [449, 1093, 1273, 1093],
];
const grey: number[][] = [
  [449, 570, 2552, 570], [2552, 570, 2552, 1369], [506, 570, 506, 1209], [1018, 570, 1018, 1369], [449, 1209, 1018, 1209],
  [449, 1241, 986, 1241], [986, 1241, 986, 1369], [449, 1273, 954, 1273], [954, 1273, 954, 1369],
  [762, 585, 762, 613], [573, 584, 917, 584],
];
const light: number[][] = [[922, 454, 922, 482], [922, 495, 922, 527], [922, 540, 922, 613]];
const posts = [573, 633, 686, 690, 744, 747, 801, 804, 856, 860, 917, 1311, 1313, 1374, 1376, 1482, 1545, 1652, 1716, 1822, 1886, 1993, 2056, 2163, 2227];
const tops = [[1311, 1376], [1482, 1545], [1652, 1716], [1822, 1886], [1993, 2056], [2163, 2227]];
const steps = [[580, 626], [637, 682], [694, 739], [751, 796], [807, 853], [864, 893], [1274, 1411], [1444, 1582], [1615, 1752], [1785, 1923], [1956, 2093], [2126, 2195]];
const caps = [[573, 632, 582, 624], [751, 795, 766, 782], [1313, 1372, 1322, 1364], [1832, 1876, 1847, 1861]];

const Lines = ({ data }: { data: number[][] }) => (
  <>{data.map((l, i) => <line key={i} x1={l[0] + 0.5} y1={l[1] + 0.5} x2={l[2] + 0.5} y2={l[3] + 0.5} />)}</>
);

function Drawing() {
  return (
    <svg viewBox="449 169 2111 1200" preserveAspectRatio="xMidYMid slice" className="absolute inset-0 size-full" fill="none">
      <path fill="#000" d="M449 169h2111v1200H449z" />
      <path fill="#373737" d="M449 169h2111v284H449z" />
      <path stroke="#777" strokeWidth="2" d="M449 453.500h2111" />
      <g fontFamily='"Noto Sans CJK SC", sans-serif' fontWeight="100" textAnchor="middle" fill="#aaa" stroke="#000">
        <text fontSize="150" strokeWidth="2" transform="translate(824 935) rotate(-90)">2AA1</text>
        <text fontSize="190" strokeWidth="3" x="1785" y="960">T2</text>
        <text fontSize="200" strokeWidth="3" x="1785" y="1346">2000kVA</text>
        <g fill="#fff" strokeWidth="2">
          <text fontSize="134" transform="translate(571 856) rotate(-90)">1AA2</text>
          <text fontSize="120" transform="translate(1142 857) rotate(-90)">1AA1</text>
          <text fontSize="158" x="2055" y="963">2000kVA</text>
          <text fontSize="130" x="2055" y="1258">T1</text>
        </g>
      </g>
      <g stroke="#777"><Lines data={grey} /></g>
      <g stroke="#bbb"><Lines data={light} /></g>
      <g stroke="#fff">
        <Lines data={white} />
        <Lines data={posts.map((x) => [x, 584, x, 610])} />
        <Lines data={tops.map(([a, b]) => [a, 584, b, 584])} />
        {steps.map(([a, b]) => <path key={a} d={`M${a}.500 597V594.500H${b}.500V597`} />)}
        {caps.map(([a, b, c, d]) => <path key={a} d={`M${a}.500 584V578.500H${b}.500V584M${c}.500 578V584M${d}.500 578V584`} />)}
        <path strokeWidth="2" strokeDasharray="14 3 22 5 8 2" d="M449 595.500h38M887 595.500h113M2195 595.500h340" />
      </g>
      <path stroke="#f01010" strokeWidth="2" d="M449 533.500h2111M449 1172.500h905" />
      <path stroke="#b00" d="M1353.500 533v836" />
      <path fill="#fff" fillOpacity=".165" d="M1928 169h256v284h-256z" />
      <path fill="#fff" fillOpacity=".22" d="M1928 453h256v916h-256z" />
      <path stroke="#888" d="M1928.500 169v1200M2184.500 169v1200" />
      <path stroke="#777" strokeWidth="2" d="M1929 198h255" />
      <path fill="#ffdc3f" fillOpacity=".4" fillRule="evenodd" d="M842 534h511v638H842zM893 585v536h410V585z" />
      <path fill="#ffdc3f" fillOpacity=".1" d="M893 585h410v536H893z" />
      <g stroke="#2b90f0">
        <clipPath id="hatch"><path d="M858 769h478v192H858z" /></clipPath>
        <path d="M857.500 769.500h479v191h-479z" />
        <g clipPath="url(#hatch)">
          {Array.from({ length: 16 }, (_, i) => <path key={i} d={`M${930 + i * 43} 769l-252 192`} />)}
        </g>
      </g>
      <path fill="#0f0" d="M1091 859h12v12h-12z" />
      <g fill="#fff" fontFamily='"Noto Sans", sans-serif' fontSize="28">
        <text x="841" y="555">1AA1</text>
        <text x="841" y="585">(0.800m2)</text>
      </g>
      <g fontFamily='"Noto Sans CJK SC", sans-serif' fontSize="14" textAnchor="middle">
        <path stroke="#0f0" strokeWidth="3" d="M499 1314v-15" />
        <path fill="#0f0" d="M499 1290l5 11h-10z" />
        <path stroke="red" strokeWidth="4" d="M504 1319h14" />
        <path fill="red" d="M529 1319l-12-5v10z" />
        <circle cx="499" cy="1319" r="5.500" fill="#00c" />
        <text x="499" y="1287" fill="#0f0">Y</text>
        <text x="535" y="1324" fill="red">X</text>
      </g>
    </svg>
  );
}

function Canvas() {
  return (
    <main className="relative min-w-0 flex-1 overflow-hidden bg-black">
      <Drawing />
      <div className="absolute right-0 top-0 flex w-8 flex-col items-center rounded-b bg-white py-[13px]">
        <button aria-label="动态观察"><Icon name="orbit" className="size-5" /></button>
        <button aria-label="三维" className="mt-2"><Icon name="cube3d" className="size-5" /></button>
        <button aria-label="俯视" className="mt-2"><Icon name="cubeTop" className="size-5" /></button>
        <Caret className="my-2 border-t-[#444]" />
        <button aria-label="实体"><Icon name="cubeBlue" className="size-5" /></button>
        <Caret className="my-2 border-t-[#444]" />
        <button aria-label="旋转"><Icon name="rotate" className="size-5" /></button>
        <Caret className="my-2 border-t-[#444]" />
        <span className="mb-2 h-px w-6 bg-[#666]" />
        <button aria-label="显示设置"><Icon name="listEye" className="size-5" /></button>
      </div>
      <button aria-label="收藏" className="absolute bottom-[83px] right-[44px] flex size-10 items-center justify-center rounded-full bg-[#1a73e8]">
        <svg viewBox="0 0 24 24" className="size-6" fill="#fff" stroke="#fff" strokeWidth="2" strokeLinejoin="round"><path d="M12 3l2.700 6 6.300.600-4.800 4.300 1.500 6.300L12 17l-5.700 3.200 1.500-6.300L3 9.600 9.300 9z" /></svg>
      </button>
      <div className="absolute inset-x-0 bottom-0 flex h-[26px] items-center justify-center gap-1 bg-[#303030]/85 text-white">
        <Icon name="arrowsIn" className="size-4" />按鼠标左键指定第一个角点，或拾取构件图元
      </div>
    </main>
  );
}

function StatusBar() {
  const btn = 'flex h-[25px] items-center justify-center gap-1.5 rounded border border-[#9a9a9a] bg-white';
  return (
    <footer className="shrink-0">
      <div className="flex h-[31px] items-center gap-[6px] bg-[#fbfbfb] pl-0.5">
        <span className="w-[114px]">层高：6.6</span>
        <span className="w-[134px]">底标高：-6.6</span>
        <span className="w-[104px]">选中图元：1(1)</span>
        <span className="w-[104px]">隐藏图元：0</span>
        <div className="flex items-center gap-[3px]">
          <button aria-label="查找" className={`${btn} w-[25px]`}><Icon name="sbFind" className="size-[18px]" /></button>
          <button aria-label="正交" className={`${btn} w-[25px]`}><Icon name="sbOrtho" className="size-4" /></button>
          <button aria-label="矩形框选" className="flex h-[25px] w-9 items-center justify-center gap-1.5 rounded border border-[#1a73e8] bg-[#d6e6fb]"><Icon name="sbRect" className="size-[18px]" /><Caret className="border-t-[#444]" /></button>
          <button aria-label="视图立方" className={`${btn} w-9`}><Icon name="sbCube" className="size-[17px]" /><Caret className="border-t-[#444]" /></button>
          <button aria-label="交点" className={`${btn} w-[25px]`}><Icon name="sbCross" className="size-4" /></button>
          <button aria-label="角度" className={`${btn} w-9`}><Icon name="sbAngle" className="size-4" /><Caret className="border-t-[#444]" /></button>
          <button aria-label="偏移" className={`${btn} w-9`}><Icon name="sbPlus" className="size-4" /><Caret className="border-t-[#444]" /></button>
          <button aria-label="选择" className={`${btn} w-[25px]`}><Icon name="sbSelect" className="size-4" /></button>
          <button aria-label="折线" className={`${btn} w-[25px]`}><Icon name="sbCurve" className="size-4" /></button>
        </div>
        <span className="w-[107px] whitespace-nowrap">CAD图亮度：100%</span>
        <div className="flex items-center">
          <button aria-label="降低亮度" className={`${btn} w-[25px]`}><Icon name="minus" className="size-[15px]" /></button>
          <input type="range" aria-label="CAD图亮度" defaultValue={100} className="h-5 w-[45px] appearance-none bg-transparent [&::-webkit-slider-runnable-track]:h-0.5 [&::-webkit-slider-runnable-track]:bg-[#c8c8c8] [&::-webkit-slider-thumb]:-mt-2 [&::-webkit-slider-thumb]:h-[18px] [&::-webkit-slider-thumb]:w-2 [&::-webkit-slider-thumb]:appearance-none [&::-webkit-slider-thumb]:rounded-sm [&::-webkit-slider-thumb]:border [&::-webkit-slider-thumb]:border-[#4b5368] [&::-webkit-slider-thumb]:bg-[#f0f0f0]" />
          <button aria-label="提高亮度" className={`${btn} w-[25px]`}><Icon name="plus" className="size-[15px]" /></button>
        </div>
      </div>
      <div className="flex h-2 overflow-hidden bg-[#203021]">
        <div className="ml-12 h-2 w-72 bg-[#f1f1f1]">
          <svg viewBox="0 0 288 8" className="h-2 w-72"><path d="M233 2q8-4 20 2v4h-20z" fill="#6b4a3c" /><path d="M257 0l3 5 4-1-2 4" stroke="#d8a040" fill="none" /></svg>
        </div>
        <div className="ml-[198px] h-2 w-12 bg-[#4f5d50]" />
        <span className="ml-auto mr-[76px] pt-1 text-[12px] leading-3 text-white">9:26</span>
      </div>
    </footer>
  );
}

export default function App() {
  return (
    <div className="flex h-screen flex-col overflow-hidden bg-white font-['Noto_Sans','Noto_Sans_CJK_SC',sans-serif] text-[12px] leading-4 text-[#2b2b2b]">
      <Header />
      <Ribbon />
      <FilterBar />
      <div className="flex min-h-0 flex-1">
        <NavPanel />
        <div className="ml-1 flex w-[316px] shrink-0 flex-col">
          <ComponentPanel />
          <PropertyPanel />
        </div>
        <div className="w-1 shrink-0 bg-white pt-[550px]"><div className="h-[100px] w-1 bg-[#5b6673]" /></div>
        <Canvas />
      </div>
      <StatusBar />
    </div>
  );
}
